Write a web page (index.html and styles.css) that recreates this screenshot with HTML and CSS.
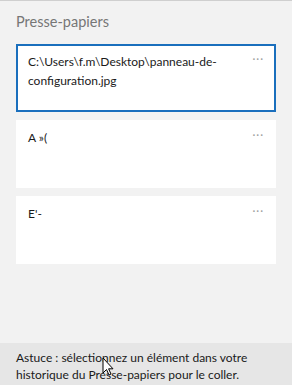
FILE: index.html
```html
<!DOCTYPE html>
<html lang="fr">
<head>
<meta charset="UTF-8">
<meta name="viewport" content="width=device-width, initial-scale=1.0">
<title>Presse-papiers</title>
<link rel="stylesheet" href="styles.css">
</head>
<body>

<div class="panel">
  <h1 class="title">Presse-papiers</h1>

  <div class="list">
    <div class="item selected">
      <p class="item-text">C:\Users\f.m\Desktop\panneau-de-<br>configuration.jpg</p>
      <span class="more">···</span>
    </div>
    <div class="item">
      <p class="item-text">A »(</p>
      <span class="more">···</span>
    </div>
    <div class="item">
      <p class="item-text">E'-</p>
      <span class="more">···</span>
    </div>
  </div>

  <div class="tip">
    Astuce : sélectionnez un élément dans votre historique du Presse-papiers pour le coller.
    <svg class="cursor" width="12" height="19" viewBox="0 0 12 19">
      <path d="M1 1 L1 16 L4.5 12.5 L7 18 L9 17 L6.6 11.8 L11 11.8 Z" fill="#fff" stroke="#000" stroke-width="1"/>
    </svg>
  </div>
</div>

</body>
</html>
```

FILE: styles.css
```css
body {
    margin: 0;
    padding: 0;
    font-family: Lato, "Noto Sans", sans-serif;
    background-color: #f2f2f2;
}

.panel {
    width: 292px;
    height: 385px;
    box-sizing: border-box;
    border-top: 1px solid #cfcfcf;
    display: flex;
    flex-direction: column;
    background-color: #f2f2f2;
}

.title {
    margin: 0;
    padding: 11px 16px 0 16px;
    height: 32px;
    font-size: 14.5px;
    font-weight: normal;
    color: #767676;
    line-height: 20px;
}

.list {
    display: flex;
    flex-direction: column;
    gap: 8px;
    padding: 0 16px;
}

.item {
    height: 68px;
    box-sizing: border-box;
    background-color: #fff;
    padding: 8px 12px;
    display: flex;
    justify-content: space-between;
    align-items: flex-start;
}

.item.selected {
    border: 2px solid #1a6fbd;
    padding: 6px 10px;
}

.item-text {
    margin: 0;
    font-size: 12px;
    line-height: 19px;
    color: #1a1a1a;
}

.more {
    color: #a0a0a0;
    font-size: 11px;
    line-height: 14px;
    letter-spacing: 1px;
}

.tip {
    margin-top: auto;
    position: relative;
    background-color: #e6e6e6;
    padding: 6px 16px 4px 16px;
    height: 42px;
    box-sizing: border-box;
    font-size: 12px;
    line-height: 17px;
    color: #1a1a1a;
}

.cursor {
    position: absolute;
    left: 102px;
    top: 14px;
}
```
